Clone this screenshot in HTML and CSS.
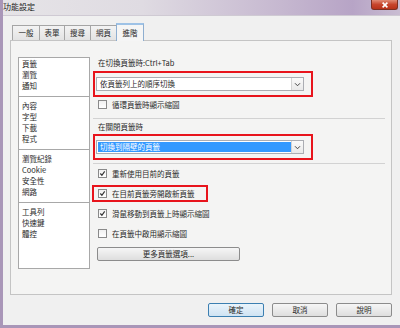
FILE: index.html
```html
<!DOCTYPE html>
<html>
  <head>
    <meta charset="utf-8">
    <title>功能設定</title>
    <link rel="stylesheet" href="styles.css">
  </head>
  <body>
    <div class="window">
      <div class="titlebar">
        <span class="title">功能設定</span>
        <span class="close">
          <svg viewBox="0 0 10 10" width="8" height="8"><path d="M2 2 L8 8 M8 2 L2 8" stroke="#fff" stroke-width="2"/></svg>
        </span>
      </div>
      <div class="content">
        <div class="tabs">
          <div class="tab t1">一般</div>
          <div class="tab t2">表單</div>
          <div class="tab t3">搜尋</div>
          <div class="tab t4">網頁</div>
          <div class="tab active">進階</div>
        </div>
        <div class="panel">
          <div class="list">
            <div class="group first">
              <div>頁籤</div>
              <div>瀏覽</div>
              <div>通知</div>
            </div>
            <div class="group">
              <div>內容</div>
              <div>字型</div>
              <div>下載</div>
              <div>程式</div>
            </div>
            <div class="group">
              <div>瀏覽紀錄</div>
              <div>Cookie</div>
              <div>安全性</div>
              <div>網路</div>
            </div>
            <div class="group last">
              <div>工具列</div>
              <div>快速鍵</div>
              <div>體控</div>
            </div>
          </div>
          <div class="settings">
            <div class="label">在切換頁籤時:Ctrl+Tab</div>
            <div class="mark">
              <div class="select">
                <span class="value">依頁籤列上的順序切換</span>
                <span class="arrow"><svg viewBox="0 0 8 6" width="7" height="5"><path d="M1 1.5 L4 4.5 L7 1.5" fill="none" stroke="#444" stroke-width="1.2"/></svg></span>
              </div>
            </div>
            <div class="check first-check"><span class="box"></span>循環頁籤時顯示縮圖</div>
            <div class="sep"></div>
            <div class="label small-gap">在關閉頁籤時</div>
            <div class="mark mark-2">
              <div class="select">
                <span class="value picked">切換到隔壁的頁籤</span>
                <span class="arrow"><svg viewBox="0 0 8 6" width="7" height="5"><path d="M1 1.5 L4 4.5 L7 1.5" fill="none" stroke="#444" stroke-width="1.2"/></svg></span>
              </div>
            </div>
            <div class="sep sep-2"></div>
            <div class="checks">
              <div class="check"><span class="box on"><svg viewBox="0 0 8 8" width="7" height="7"><path d="M1.5 4 L3.3 6 L6.5 1.5" fill="none" stroke="#333" stroke-width="1.3"/></svg></span>重新使用目前的頁籤</div>
              <div class="mark-3">
                <div class="check"><span class="box on"><svg viewBox="0 0 8 8" width="7" height="7"><path d="M1.5 4 L3.3 6 L6.5 1.5" fill="none" stroke="#333" stroke-width="1.3"/></svg></span>在目前頁籤旁開啟新頁籤</div>
              </div>
              <div class="check"><span class="box on"><svg viewBox="0 0 8 8" width="7" height="7"><path d="M1.5 4 L3.3 6 L6.5 1.5" fill="none" stroke="#333" stroke-width="1.3"/></svg></span>滑鼠移動到頁籤上時顯示縮圖</div>
              <div class="check"><span class="box"></span>在頁籤中啟用顯示縮圖</div>
            </div>
            <div class="more">更多頁籤選項...</div>
          </div>
        </div>
        <div class="buttons">
          <div class="btn default">確定</div>
          <div class="btn">取消</div>
          <div class="btn">說明</div>
        </div>
      </div>
    </div>
  </body>
</html>
```

FILE: styles.css
```css
body {
  margin: 0;
  font-family: "Noto Sans CJK TC", "Liberation Sans", sans-serif;
  font-size: 7.5px;
  color: #2a2a2a;
}
.window {
  width: 397px;
  height: 325px;
  background: #f0f0f0;
  border-left: 3px solid #a996b8;
  border-bottom: 3px solid #a996b8;
}
.titlebar {
  height: 16px;
  display: flex;
  align-items: flex-start;
  background: linear-gradient(to right, #e6e4e7 0%, #dfdbe2 35%, #c6b8d0 70%, #b7a4c6 88%, #c9bdd2 100%);
  border-bottom: 1px solid #cfcad3;
  box-sizing: border-box;
}
.title {
  font-size: 8px;
  line-height: 10px;
  padding-top: 2px;
  color: #222;
}
.close {
  margin-left: auto;
  margin-right: 2px;
  width: 27px;
  height: 10px;
  display: flex;
  align-items: center;
  justify-content: center;
  background: linear-gradient(#e08a74, #c7452c 50%, #b8321a);
  border: 1px solid #7d3022;
  border-top: none;
  border-radius: 0 0 3px 3px;
  box-sizing: border-box;
}
.content {
  padding: 7px 8px 0 7px;
}
.tabs {
  display: flex;
  align-items: flex-end;
  height: 17px;
  margin-left: 2px;
}
.tab {
  height: 15px;
  line-height: 14px;
  text-align: center;
  box-sizing: border-box;
  border: 1px solid #a5a5a5;
  border-bottom: none;
  margin-right: -1px;
  background: linear-gradient(#f3f3f3, #e3e3e3);
}
.t1 { width: 28px; }
.t2 { width: 26px; }
.t3 { width: 27px; }
.t4 { width: 27px; }
.tab.active {
  width: 28px;
  height: 18px;
  margin-bottom: -1px;
  line-height: 16px;
  position: relative;
  z-index: 1;
  background: #f5f5f5;
  border-color: #8eaed0;
  border-top: 2px solid #9ec2e6;
  border-bottom: none;
}
.panel {
  height: 255px;
  box-sizing: border-box;
  border: 1px solid #c4c4c4;
  background: #f4f4f3;
  display: flex;
  padding: 16px 6px 0 7px;
}
.list {
  width: 72px;
  height: 212px;
  box-sizing: border-box;
  background: #fff;
  border: 1px solid #a8a8a8;
  line-height: 11px;
}
.group {
  padding: 3px 0 5px 3px;
  border-bottom: 1px solid #a8a8a8;
}
.group.first {
  padding-top: 0;
}
.group.last {
  border-bottom: none;
}
.settings {
  flex: 1;
  margin-left: 3px;
  line-height: 11px;
}
.label {
  padding-left: 5px;
}
.small-gap {
  margin-top: 2px;
}
.mark {
  width: 220px;
  height: 26px;
  box-sizing: border-box;
  border: 2px solid #e8141c;
  margin-top: 3px;
  padding: 4px 0 0 1px;
}
.mark-2 {
  margin-top: 2px;
}
.select {
  width: 208px;
  height: 14px;
  box-sizing: border-box;
  border: 1px solid #abadb3;
  background: #fff;
  display: flex;
  align-items: stretch;
}
.value {
  flex: 1;
  line-height: 12px;
  padding-left: 3px;
}
.value.picked {
  background: #3399ff;
  color: #fff;
  margin: 1px 0 1px 1px;
  line-height: 10px;
  padding-left: 2px;
}
.arrow {
  width: 11px;
  display: flex;
  align-items: center;
  justify-content: center;
  border-left: 1px solid #d4d4d4;
  background: linear-gradient(#fafafa, #e9e9e9);
}
.check {
  display: flex;
  align-items: center;
  height: 12px;
  padding-left: 5px;
}
.first-check {
  margin-top: 1px;
}
.box {
  width: 9px;
  height: 9px;
  box-sizing: border-box;
  border: 1px solid #8a8a8a;
  background: linear-gradient(#f0f0f0, #fff);
  margin-right: 5px;
  display: flex;
  align-items: center;
  justify-content: center;
}
.sep {
  height: 1px;
  background: #d2d2d2;
  margin-top: 8px;
}
.sep-2 {
  margin-top: 3px;
}
.checks {
  margin-top: 3px;
}
.checks > .check,
.checks > .mark-3 {
  margin-bottom: 8px;
}
.mark-3 {
  width: 116px;
  box-sizing: border-box;
  border: 2px solid #e8141c;
  margin-left: -1px;
  margin-top: -2px;
  padding-bottom: 1px;
}
.checks > .mark-3 {
  margin-bottom: 5px;
}
.mark-3 .check {
  padding-left: 4px;
}
.more {
  width: 143px;
  height: 14px;
  box-sizing: border-box;
  margin-left: 4px;
  margin-top: 1px;
  text-align: center;
  line-height: 12px;
  border: 1px solid #8c8c8c;
  border-radius: 2px;
  background: linear-gradient(#f6f6f6, #dedede);
}
.buttons {
  display: flex;
  justify-content: flex-end;
  gap: 8px;
  margin-top: 8px;
}
.btn {
  width: 56px;
  height: 14px;
  box-sizing: border-box;
  text-align: center;
  line-height: 12px;
  border: 1px solid #8c8c8c;
  border-radius: 2px;
  background: linear-gradient(#f6f6f6, #dedede);
}
.btn.default {
  border-color: #3c7fb1;
  background: linear-gradient(#eaf4fb, #cfe3f3);
}
```
